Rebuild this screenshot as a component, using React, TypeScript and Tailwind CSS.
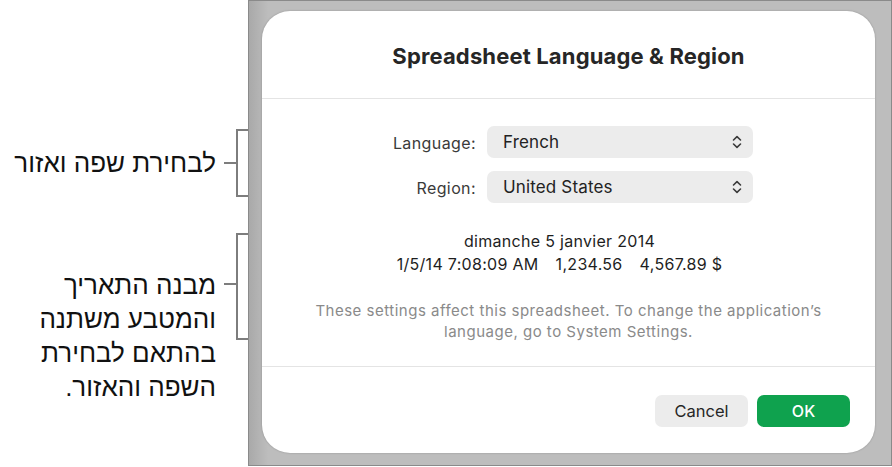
import React from "react";

function Chevrons() {
  return (
    <svg width="10" height="14" viewBox="0 0 10 14" fill="none" className="shrink-0">
      <path d="M1.5 5 L5 1.6 L8.5 5" stroke="#3a3a3a" strokeWidth="1.6" strokeLinecap="round" strokeLinejoin="round" />
      <path d="M1.5 9 L5 12.4 L8.5 9" stroke="#3a3a3a" strokeWidth="1.6" strokeLinecap="round" strokeLinejoin="round" />
    </svg>
  );
}

function PopupRow({ label, value }: { label: string; value: string }) {
  return (
    <div className="flex items-center h-[32px]">
      <div className="w-[225px] pr-[11px] pt-[1px] text-right text-[16px] tracking-[0.4px] text-[#3a3a3a]">{label}</div>
      <div className="w-[266px] h-[32px] rounded-[7px] bg-[#ececec] flex items-center justify-between pl-[16px] pr-[11px]">
        <span className="text-[17px] pt-[1px] tracking-[0.15px] text-[#222222]">{value}</span>
        <Chevrons />
      </div>
    </div>
  );
}

export default function App() {
  const heb = { fontFamily: '"Liberation Sans", "DejaVu Sans", sans-serif' };
  return (
    <div className="w-[892px] h-[467px] bg-white flex overflow-hidden" style={{ fontFamily: 'Inter, "Liberation Sans", sans-serif' }}>
      {/* Annotations */}
      <div className="w-[248px] shrink-0 flex flex-col pt-[129px]" dir="ltr">
        <div className="flex h-[68px]">
          <div className="flex-1 flex items-center justify-end pr-[8px] text-[26px] text-[#111111] leading-none" style={heb} dir="rtl">
            <span className="w-full text-right whitespace-nowrap" dir="rtl">לבחירת שפה ואזור</span>
          </div>
          <div className="w-[12px] h-[2px] bg-[#7d7d7d] self-center" />
          <div className="w-[12px] border-l-2 border-t-2 border-b-2 border-[#7d7d7d]" />
        </div>
        <div className="flex mt-[36px] items-start">
          <div className="flex-1 pr-[8px] pt-[35px] text-[26px] leading-[34px] text-[#111111] text-right whitespace-nowrap" style={heb} dir="rtl">
            <div>מבנה התאריך</div>
            <div>והמטבע משתנה</div>
            <div>בהתאם לבחירת</div>
            <div>השפה והאזור.</div>
          </div>
          <div className="w-[12px] h-[2px] bg-[#7d7d7d] mt-[50px]" />
          <div className="w-[12px] h-[107px] border-l-2 border-t-2 border-b-2 border-[#7d7d7d]" />
        </div>
      </div>

      {/* Frame */}
      <div className="w-[644px] h-[466px] shrink-0 bg-[linear-gradient(90deg,#a9a9a9_0%,#bdbdbd_3%,#bdbdbd_100%)] border border-[#8a8a8a] pl-[13px] pt-[10px]">
        <div className="w-[613px] h-[442px] bg-white rounded-[28px] shadow-[0_0_2px_rgba(0,0,0,0.25)] flex flex-col">
          <div className="h-[88px] flex items-center justify-center border-b border-[#e4e4e4] pt-[3px]">
            <span className="text-[22px] font-bold text-[#262626] tracking-[0.15px]">Spreadsheet Language &amp; Region</span>
          </div>
          <div className="flex flex-col gap-[13px] pt-[27px]">
            <PopupRow label="Language:" value="French" />
            <PopupRow label="Region:" value="United States" />
          </div>
          <div className="mt-[27px] flex flex-col items-center pr-[18px] text-[16px] tracking-[0.3px] leading-[23px] text-[#1e1e1e]">
            <div>dimanche 5 janvier 2014</div>
            <div className="flex gap-[17px]">
              <span>1/5/14 7:08:09 AM</span>
              <span>1,234.56</span>
              <span>4,567.89 $</span>
            </div>
          </div>
          <div className="mt-[24px] text-center text-[15px] tracking-[0.5px] leading-[21px] text-[#8a8a8a]">
            <div>These settings affect this spreadsheet. To change the application’s</div>
            <div>language, go to System Settings.</div>
          </div>
          <div className="mt-[24px] border-t border-[#e4e4e4] flex justify-end gap-[9px] pt-[28px] pr-[25px]">
            <button className="w-[93px] h-[32px] rounded-[7px] bg-[#ececec] text-[16.5px] text-[#262626]">Cancel</button>
            <button className="w-[93px] h-[32px] rounded-[7px] bg-[#0fa24e] text-[16px] font-medium text-white">OK</button>
          </div>
        </div>
      </div>
    </div>
  );
}
